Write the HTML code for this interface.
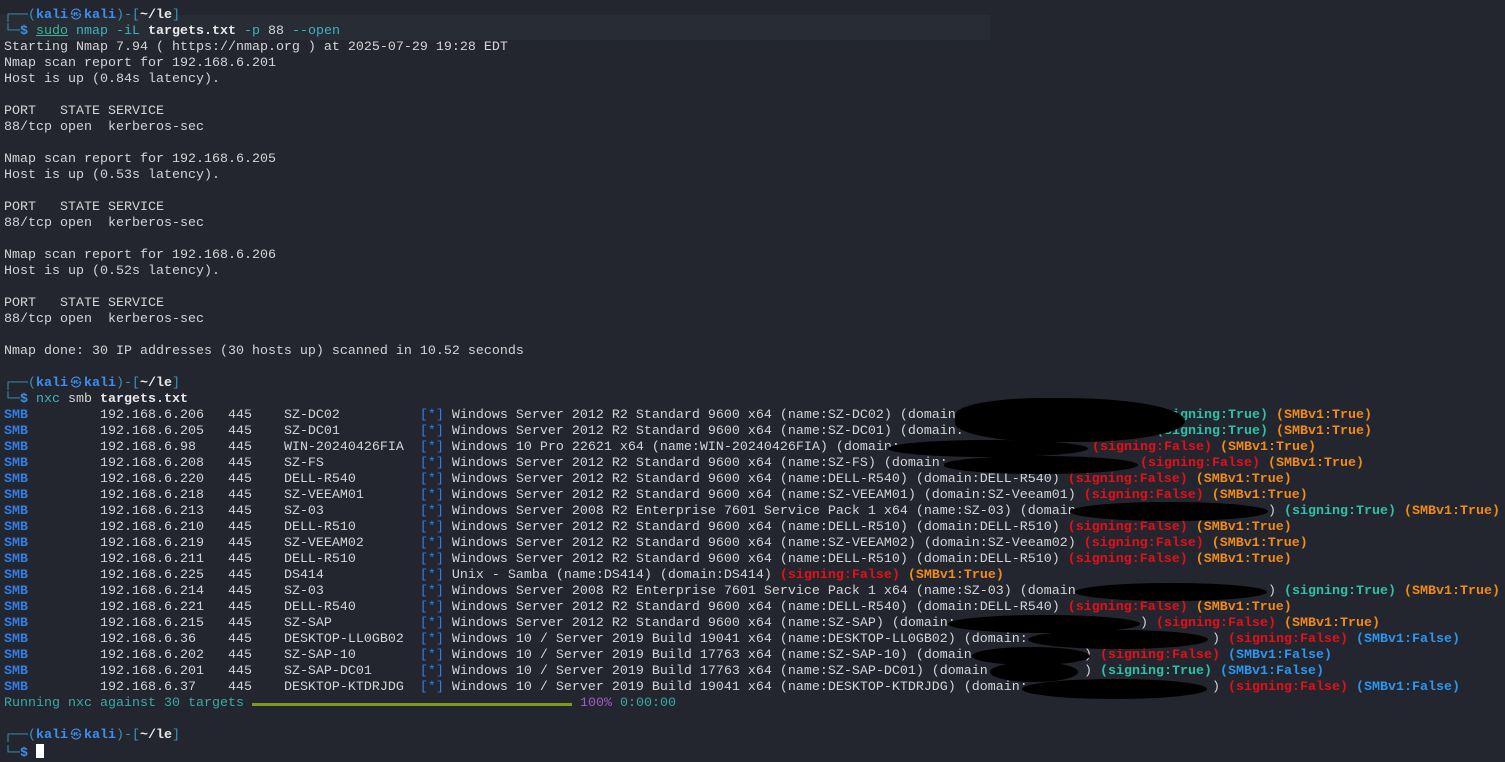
<!DOCTYPE html>
<html><head><meta charset="utf-8"><style>
body{margin:0;background:#23262e;width:1505px;height:754px;overflow:hidden;position:relative;font-family:"Liberation Mono",monospace;font-size:13.33px;color:#d4d4d6}
.hl{position:absolute;left:0;top:15px;width:990px;height:25px;background:#282c35}
.l{position:absolute;left:4px;height:16px;line-height:16px;white-space:pre}
.a{position:absolute;white-space:pre;line-height:16px;height:16px}
.pl{color:#3a95b8}.k{color:#3d8ef0;font-weight:bold}.w{color:#e8e8e8;font-weight:bold}
.m{display:inline-block;width:16px;text-align:center;font-size:11px;font-weight:normal;overflow:hidden;vertical-align:top}
.c{color:#3fb3bd}.g{color:#3fb39a;text-decoration:underline}.bo{font-weight:bold;color:#e8e8e8}
.b{color:#2f7fe6;font-weight:bold}.sb{color:#2f7fe6}
.st{color:#2ec0a8;font-weight:bold}.o{color:#f28a1a;font-weight:bold}.r{color:#e3101a;font-weight:bold}.bf{color:#2a96f0;font-weight:bold}
.blob{position:absolute;background:#000;border-radius:50%}
.tl{color:#3ca8a8}.pu{color:#a35cc4}
#w{position:absolute;left:0;top:2px;width:1505px;height:754px}
</style></head><body>
<div class="hl"></div>
<div id="w">
<div class="l" style="top:6px"><span class="pl">┌──(</span><span class="k">kali<span class="m">㉿</span>kali</span><span class="pl">)-[</span><span class="w">~/le</span><span class="pl">]</span></div>
<div class="l" style="top:22px"><span class="pl">└─</span><span class="k">$</span> <span class="g">sudo</span> <span class="c">nmap -iL</span> <span class="bo">targets.txt</span> <span class="c">-p</span> 88 <span class="c">--open</span></div>
<div class="l" style="top:38px">Starting Nmap 7.94 ( https://nmap.org ) at 2025-07-29 19:28 EDT</div>
<div class="l" style="top:54px">Nmap scan report for 192.168.6.201</div>
<div class="l" style="top:70px">Host is up (0.84s latency).</div>
<div class="l" style="top:102px">PORT   STATE SERVICE</div>
<div class="l" style="top:118px">88/tcp open  kerberos-sec</div>
<div class="l" style="top:150px">Nmap scan report for 192.168.6.205</div>
<div class="l" style="top:166px">Host is up (0.53s latency).</div>
<div class="l" style="top:198px">PORT   STATE SERVICE</div>
<div class="l" style="top:214px">88/tcp open  kerberos-sec</div>
<div class="l" style="top:246px">Nmap scan report for 192.168.6.206</div>
<div class="l" style="top:262px">Host is up (0.52s latency).</div>
<div class="l" style="top:294px">PORT   STATE SERVICE</div>
<div class="l" style="top:310px">88/tcp open  kerberos-sec</div>
<div class="l" style="top:342px">Nmap done: 30 IP addresses (30 hosts up) scanned in 10.52 seconds</div>
<div class="l" style="top:374px"><span class="pl">┌──(</span><span class="k">kali<span class="m">㉿</span>kali</span><span class="pl">)-[</span><span class="w">~/le</span><span class="pl">]</span></div>
<div class="l" style="top:390px"><span class="pl">└─</span><span class="k">$</span> <span class="c">nxc</span> smb <span class="bo">targets.txt</span></div>

<div class="l" style="top:406px"><span class="b">SMB</span>         192.168.6.206   445    SZ-DC02          <span class="sb">[*]</span> Windows Server 2012 R2 Standard 9600 x64 (name:SZ-DC02) (domain:</div>
<div class="a" style="top:406px;left:1156px"><span class="st">(signing:True)</span> <span class="o">(SMBv1:True)</span></div>
<div class="l" style="top:422px"><span class="b">SMB</span>         192.168.6.205   445    SZ-DC01          <span class="sb">[*]</span> Windows Server 2012 R2 Standard 9600 x64 (name:SZ-DC01) (domain:</div>
<div class="a" style="top:422px;left:1156px"><span class="st">(signing:True)</span> <span class="o">(SMBv1:True)</span></div>
<div class="l" style="top:438px"><span class="b">SMB</span>         192.168.6.98    445    WIN-20240426FIA  <span class="sb">[*]</span> Windows 10 Pro 22621 x64 (name:WIN-20240426FIA) (domain:</div>
<div class="a" style="top:438px;left:1092px"><span class="r">(signing:False)</span> <span class="o">(SMBv1:True)</span></div>
<div class="l" style="top:454px"><span class="b">SMB</span>         192.168.6.208   445    SZ-FS            <span class="sb">[*]</span> Windows Server 2012 R2 Standard 9600 x64 (name:SZ-FS) (domain:</div>
<div class="a" style="top:454px;left:1140px"><span class="r">(signing:False)</span> <span class="o">(SMBv1:True)</span></div>
<div class="l" style="top:470px"><span class="b">SMB</span>         192.168.6.220   445    DELL-R540        <span class="sb">[*]</span> Windows Server 2012 R2 Standard 9600 x64 (name:DELL-R540) (domain:DELL-R540) <span class="r">(signing:False)</span> <span class="o">(SMBv1:True)</span></div>
<div class="l" style="top:486px"><span class="b">SMB</span>         192.168.6.218   445    SZ-VEEAM01       <span class="sb">[*]</span> Windows Server 2012 R2 Standard 9600 x64 (name:SZ-VEEAM01) (domain:SZ-Veeam01) <span class="r">(signing:False)</span> <span class="o">(SMBv1:True)</span></div>
<div class="l" style="top:502px"><span class="b">SMB</span>         192.168.6.213   445    SZ-03            <span class="sb">[*]</span> Windows Server 2008 R2 Enterprise 7601 Service Pack 1 x64 (name:SZ-03) (domain</div>
<div class="a" style="top:502px;left:1268px">) <span class="st">(signing:True)</span> <span class="o">(SMBv1:True)</span></div>
<div class="l" style="top:518px"><span class="b">SMB</span>         192.168.6.210   445    DELL-R510        <span class="sb">[*]</span> Windows Server 2012 R2 Standard 9600 x64 (name:DELL-R510) (domain:DELL-R510) <span class="r">(signing:False)</span> <span class="o">(SMBv1:True)</span></div>
<div class="l" style="top:534px"><span class="b">SMB</span>         192.168.6.219   445    SZ-VEEAM02       <span class="sb">[*]</span> Windows Server 2012 R2 Standard 9600 x64 (name:SZ-VEEAM02) (domain:SZ-Veeam02) <span class="r">(signing:False)</span> <span class="o">(SMBv1:True)</span></div>
<div class="l" style="top:550px"><span class="b">SMB</span>         192.168.6.211   445    DELL-R510        <span class="sb">[*]</span> Windows Server 2012 R2 Standard 9600 x64 (name:DELL-R510) (domain:DELL-R510) <span class="r">(signing:False)</span> <span class="o">(SMBv1:True)</span></div>
<div class="l" style="top:566px"><span class="b">SMB</span>         192.168.6.225   445    DS414            <span class="sb">[*]</span> Unix - Samba (name:DS414) (domain:DS414) <span class="r">(signing:False)</span> <span class="o">(SMBv1:True)</span></div>
<div class="l" style="top:582px"><span class="b">SMB</span>         192.168.6.214   445    SZ-03            <span class="sb">[*]</span> Windows Server 2008 R2 Enterprise 7601 Service Pack 1 x64 (name:SZ-03) (domain</div>
<div class="a" style="top:582px;left:1268px">) <span class="st">(signing:True)</span> <span class="o">(SMBv1:True)</span></div>
<div class="l" style="top:598px"><span class="b">SMB</span>         192.168.6.221   445    DELL-R540        <span class="sb">[*]</span> Windows Server 2012 R2 Standard 9600 x64 (name:DELL-R540) (domain:DELL-R540) <span class="r">(signing:False)</span> <span class="o">(SMBv1:True)</span></div>
<div class="l" style="top:614px"><span class="b">SMB</span>         192.168.6.215   445    SZ-SAP           <span class="sb">[*]</span> Windows Server 2012 R2 Standard 9600 x64 (name:SZ-SAP) (domain:</div>
<div class="a" style="top:614px;left:1140px">) <span class="r">(signing:False)</span> <span class="o">(SMBv1:True)</span></div>
<div class="l" style="top:630px"><span class="b">SMB</span>         192.168.6.36    445    DESKTOP-LL0GB02  <span class="sb">[*]</span> Windows 10 / Server 2019 Build 19041 x64 (name:DESKTOP-LL0GB02) (domain:</div>
<div class="a" style="top:630px;left:1212px">) <span class="r">(signing:False)</span> <span class="bf">(SMBv1:False)</span></div>
<div class="l" style="top:646px"><span class="b">SMB</span>         192.168.6.202   445    SZ-SAP-10        <span class="sb">[*]</span> Windows 10 / Server 2019 Build 17763 x64 (name:SZ-SAP-10) (domain</div>
<div class="a" style="top:646px;left:1084px">) <span class="r">(signing:False)</span> <span class="bf">(SMBv1:False)</span></div>
<div class="l" style="top:662px"><span class="b">SMB</span>         192.168.6.201   445    SZ-SAP-DC01      <span class="sb">[*]</span> Windows 10 / Server 2019 Build 17763 x64 (name:SZ-SAP-DC01) (domain</div>
<div class="a" style="top:662px;left:1084px">) <span class="st">(signing:True)</span> <span class="bf">(SMBv1:False)</span></div>
<div class="l" style="top:678px"><span class="b">SMB</span>         192.168.6.37    445    DESKTOP-KTDRJDG  <span class="sb">[*]</span> Windows 10 / Server 2019 Build 19041 x64 (name:DESKTOP-KTDRJDG) (domain:</div>
<div class="a" style="top:678px;left:1212px">) <span class="r">(signing:False)</span> <span class="bf">(SMBv1:False)</span></div>

<div class="l" style="top:694px"><span class="tl">Running nxc against 30 targets</span></div>
<div style="position:absolute;left:252px;top:701px;width:320px;height:3px;background:#7f9b1f"></div>
<div class="a" style="top:694px;left:580px"><span class="pu">100%</span> <span class="tl">0:00:00</span></div>
<div class="l" style="top:726px"><span class="pl">┌──(</span><span class="k">kali<span class="m">㉿</span>kali</span><span class="pl">)-[</span><span class="w">~/le</span><span class="pl">]</span></div>
<div class="l" style="top:742px"><span class="pl">└─</span><span class="k">$</span> <span style="display:inline-block;width:8px;height:14px;background:#fff;vertical-align:-2px"></span></div>

<div class="blob" style="left:955px;top:396px;width:230px;height:44px;border-radius:40% 55% 50% 45%"></div>
<div class="blob" style="left:888px;top:438px;width:200px;height:17px"></div>
<div class="blob" style="left:943px;top:454px;width:195px;height:18px"></div>
<div class="blob" style="left:1070px;top:500px;width:198px;height:19px"></div>
<div class="blob" style="left:1075px;top:581px;width:192px;height:18px"></div>
<div class="blob" style="left:948px;top:613px;width:192px;height:18px"></div>
<div class="blob" style="left:1028px;top:628px;width:180px;height:19px"></div>
<div class="blob" style="left:972px;top:645px;width:118px;height:18px"></div>
<div class="blob" style="left:990px;top:660px;width:88px;height:20px"></div>
<div class="blob" style="left:1022px;top:677px;width:185px;height:20px"></div>
</div>
</body></html>
